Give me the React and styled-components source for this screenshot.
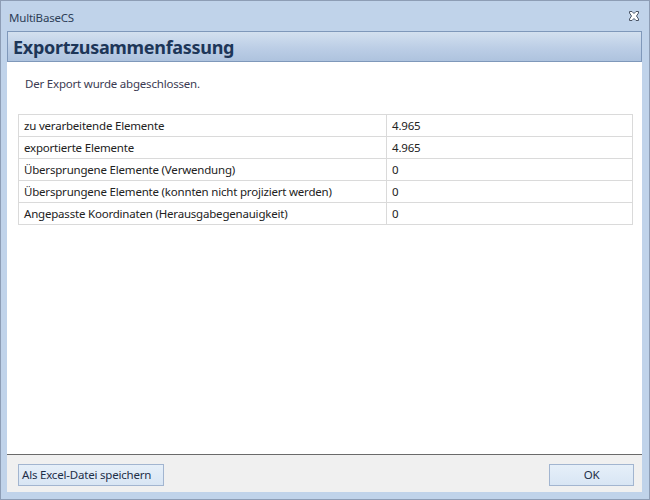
import React from 'react';
import styled, { createGlobalStyle } from 'styled-components';

const GlobalStyle = createGlobalStyle`
  html, body {
    margin: 0;
    padding: 0;
    background: #ffffff;
  }
  body {
    font-family: "Noto Sans", "Open Sans", sans-serif;
    font-size: 11.5px;
    letter-spacing: -0.2px;
  }
`;

// Window frame
const Window = styled.div`
  box-sizing: border-box;
  width: 650px;
  height: 500px;
  display: flex;
  flex-direction: column;
  border: 1px solid #8d9db5;
  background: #c0d3ea;
  padding: 0 7px 7px 6px;
`;

const TitleBar = styled.div`
  height: 30px;
  display: flex;
  align-items: center;
  justify-content: space-between;
  padding: 2px 2px 0 2px;
  box-sizing: border-box;
  color: #2d3e57;
`;

const CloseButton = styled.div`
  width: 12px;
  height: 10px;
  display: flex;
  align-items: center;
  justify-content: center;
  margin-top: -3px;
`;

const HeaderPanel = styled.div`
  height: 29px;
  display: flex;
  align-items: center;
  padding: 0 5px;
  border: 1px solid #7f98ba;
  background: linear-gradient(to bottom, #d3e0ef 0%, #bccee6 55%, #aec3de 100%);
`;

const HeaderTitle = styled.h1`
  margin: 0;
  font-size: 18px;
  font-weight: 700;
  color: #1d3658;
  letter-spacing: -0.3px;
`;

const Content = styled.div`
  flex: 1;
  background: #ffffff;
  padding: 12px 9px 0 11px;
  border-bottom: 1px solid #6a6a6a;
`;

const Message = styled.p`
  margin: 0 0 0 7px;
  color: #3b3b52;
  line-height: 20px;
`;

const Table = styled.div`
  margin-top: 20px;
  display: grid;
  grid-template-columns: 368px 1fr;
  border-top: 1px solid #dadada;
  border-left: 1px solid #dadada;
`;

const Cell = styled.div`
  height: 21px;
  line-height: 21px;
  padding-left: 5px;
  border-right: 1px solid #dadada;
  border-bottom: 1px solid #dadada;
  color: #222222;
  white-space: nowrap;
  overflow: hidden;
`;

const Footer = styled.div`
  height: 37px;
  display: flex;
  align-items: center;
  justify-content: space-between;
  padding: 0 8px 0 11px;
  background: #f0f0f0;
`;

const Button = styled.button`
  box-sizing: border-box;
  height: 22px;
  width: ${({ $width }) => $width}px;
  padding: 0 3px;
  border: 1px solid #a2b5d0;
  background: linear-gradient(to bottom, #e6eff9 0%, #d8e5f4 100%);
  color: #1e2f48;
  font-family: "Noto Sans", "Open Sans", sans-serif;
  font-size: 11.5px;
  letter-spacing: -0.2px;
  white-space: nowrap;
  text-align: ${({ $center }) => ($center ? 'center' : 'left')};
  margin-top: 2px;
`;

const rows = [
  ['zu verarbeitende Elemente', '4.965'],
  ['exportierte Elemente', '4.965'],
  ['Übersprungene Elemente (Verwendung)', '0'],
  ['Übersprungene Elemente (konnten nicht projiziert werden)', '0'],
  ['Angepasste Koordinaten (Herausgabegenauigkeit)', '0'],
];

const CloseIcon = () => (
  <svg width="12" height="10" viewBox="0 0 12 10">
    <path
      d="M1.5 0.5 H4 L6 2.5 L8 0.5 H10.5 V2 L8.5 5 L10.5 8 V9.5 H8 L6 7.5 L4 9.5 H1.5 V8 L3.5 5 L1.5 2 Z"
      fill="#ffffff"
      stroke="#4a5566"
      strokeWidth="1"
    />
  </svg>
);

export default function App() {
  return (
    <>
      <GlobalStyle />
      <Window>
        <TitleBar>
          <span>MultiBaseCS</span>
          <CloseButton>
            <CloseIcon />
          </CloseButton>
        </TitleBar>
        <HeaderPanel>
          <HeaderTitle>Exportzusammenfassung</HeaderTitle>
        </HeaderPanel>
        <Content>
          <Message>Der Export wurde abgeschlossen.</Message>
          <Table>
            {rows.map(([label, value]) => (
              <React.Fragment key={label}>
                <Cell>{label}</Cell>
                <Cell>{value}</Cell>
              </React.Fragment>
            ))}
          </Table>
        </Content>
        <Footer>
          <Button $width={146}>Als Excel-Datei speichern</Button>
          <Button $width={85} $center>OK</Button>
        </Footer>
      </Window>
    </>
  );
}
